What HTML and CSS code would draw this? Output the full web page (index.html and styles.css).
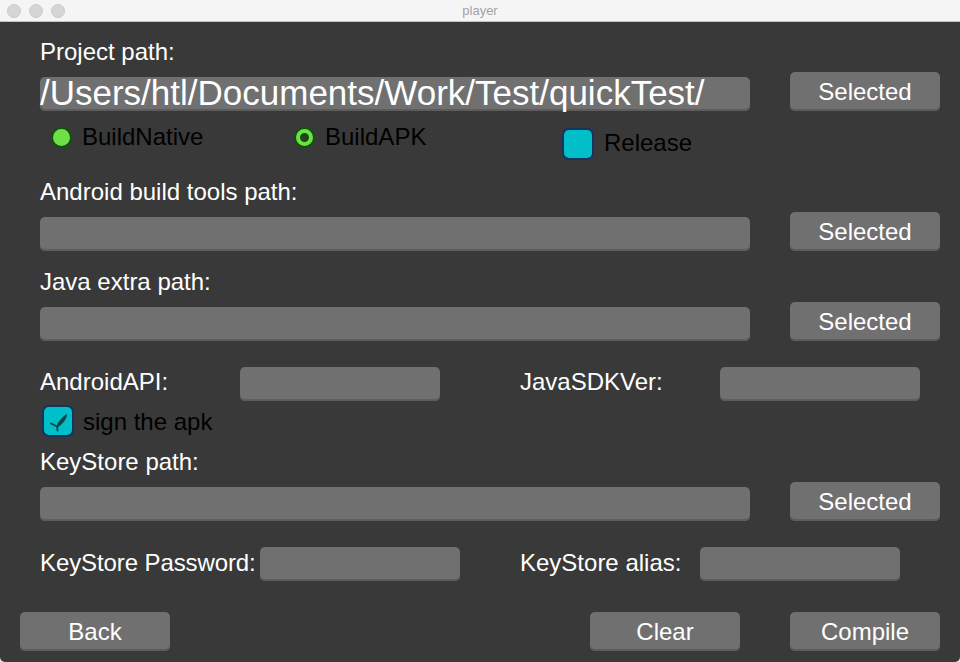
FILE: index.html
```html
<!DOCTYPE html>
<html>
<head>
<meta charset="utf-8">
<title>player</title>
<link rel="stylesheet" href="styles.css">
</head>
<body>
<div class="window">
  <div class="titlebar">
    <div class="lights"><span class="light"></span><span class="light"></span><span class="light"></span></div>
    <div class="title">player</div>
  </div>
  <div class="content">
    <div class="form">
      <div class="label label-first">Project path:</div>
      <div class="path-row">
        <div class="field field-wide"><span class="path-text">/Users/htl/Documents/Work/Test/quickTest/</span></div>
        <div class="btn">Selected</div>
      </div>
      <div class="options-row">
        <div class="option opt-native"><span class="radio"></span><span class="opt-text">BuildNative</span></div>
        <div class="option opt-apk"><span class="radio radio-ring"><span class="radio-dot"></span></span><span class="opt-text">BuildAPK</span></div>
        <div class="option opt-release"><span class="checkbox"></span><span class="opt-text release-text">Release</span></div>
      </div>
      <div class="label label-section">Android build tools path:</div>
      <div class="path-row">
        <div class="field field-wide"></div>
        <div class="btn">Selected</div>
      </div>
      <div class="label label-section2">Java extra path:</div>
      <div class="path-row">
        <div class="field field-wide"></div>
        <div class="btn">Selected</div>
      </div>
      <div class="pair-row api-row">
        <div class="pair-label">AndroidAPI:</div>
        <div class="field field-small"></div>
        <div class="pair-label pair-label-right">JavaSDKVer:</div>
        <div class="field field-small"></div>
      </div>
      <div class="sign-row">
        <span class="checkbox checkbox-checked">
          <svg class="check" viewBox="0 0 28 28" width="28" height="28">
            <path d="M7 16.5 L12.6 19.2" stroke="#0c4750" stroke-width="1.8" fill="none" stroke-linecap="round"/>
            <path d="M12.2 19.6 C14 15 17.5 10.4 23.2 6.8 C22.6 12.4 19.2 16.6 14 20.2 Z" fill="#0c4750"/>
            <path d="M13.1 19.2 L13.5 23.6" stroke="#0c4750" stroke-width="1.8" fill="none" stroke-linecap="round"/>
          </svg>
        </span>
        <span class="opt-text sign-text">sign the apk</span>
      </div>
      <div class="label label-keystore">KeyStore path:</div>
      <div class="path-row">
        <div class="field field-wide"></div>
        <div class="btn">Selected</div>
      </div>
      <div class="pair-row key-row">
        <div class="pair-label pass-label">KeyStore Password:</div>
        <div class="field field-small"></div>
        <div class="pair-label alias-label">KeyStore alias:</div>
        <div class="field field-small"></div>
      </div>
    </div>
    <div class="actions">
      <div class="btn">Back</div>
      <div class="actions-right">
        <div class="btn">Clear</div>
        <div class="btn">Compile</div>
      </div>
    </div>
  </div>
</div>
</body>
</html>
```
FILE: styles.css
```css
html, body {
  margin: 0;
  padding: 0;
  background: #e6e6e6;
}
body {
  font-family: "Liberation Sans", Arial, Helvetica, sans-serif;
}
.window {
  width: 960px;
  height: 662px;
  background: #393939;
  border-radius: 0 0 5px 5px;
  overflow: hidden;
  display: flex;
  flex-direction: column;
}
.titlebar {
  height: 21px;
  background: #f5f5f5;
  border-bottom: 1px solid #c4c4c4;
  display: flex;
  align-items: center;
  position: relative;
}
.lights {
  display: flex;
  gap: 8px;
  margin-left: 7px;
}
.light {
  width: 12px;
  height: 12px;
  border-radius: 50%;
  background: #d6d6d6;
  border: 0.5px solid #cacaca;
}
.title {
  position: absolute;
  left: 0;
  right: 0;
  text-align: center;
  font-size: 13px;
  color: #a4a4a4;
  line-height: 21px;
}
.content {
  padding: 16px 20px 0 20px;
  display: flex;
  flex-direction: column;
}
.form {
  padding-left: 20px;
  display: flex;
  flex-direction: column;
}
.label, .pair-label, .opt-text {
  font-size: 24px;
  line-height: 28px;
  color: #ffffff;
  white-space: nowrap;
}
.label-section { margin-top: 18px; }
.label-section2 { margin-top: 17px; }
.label-keystore { margin-top: 11px; }
.path-row {
  display: flex;
  align-items: flex-end;
  gap: 40px;
  margin-top: 6px;
}
.field {
  height: 34px;
  background: #707070;
  border-radius: 5px;
  box-shadow: inset 0 -2px 0 #5d5d5d;
  box-sizing: border-box;
}
.field-wide {
  width: 710px;
}
.field-small {
  width: 200px;
}
.path-text {
  display: block;
  font-size: 35px;
  line-height: 32px;
  color: #ffffff;
  white-space: nowrap;
}
.btn {
  width: 150px;
  height: 39px;
  background: #707070;
  border-radius: 5px;
  box-shadow: inset 0 -2px 0 #5d5d5d;
  color: #ffffff;
  font-size: 24px;
  line-height: 39px;
  text-align: center;
}
.options-row {
  display: flex;
  align-items: flex-start;
  margin-top: 12px;
}
.option {
  display: flex;
  align-items: flex-start;
}
.opt-text {
  color: #000000;
}
.opt-native {
  margin-left: 11px;
  width: 243px;
}
.opt-apk {
  width: 268px;
}
.radio {
  width: 21px;
  height: 21px;
  box-sizing: border-box;
  border-radius: 50%;
  background: #6ee046;
  border: 2px solid #10520f;
  margin-top: 4px;
  margin-right: 10px;
  display: flex;
  align-items: center;
  justify-content: center;
}
.radio-dot {
  width: 9px;
  height: 9px;
  box-sizing: border-box;
  border-radius: 50%;
  background: #2f3a2e;
  border: 2px solid #0f4d10;
}
.checkbox {
  width: 32px;
  height: 32px;
  box-sizing: border-box;
  border-radius: 7px;
  background: #00bfc8;
  border: 2px solid #14355f;
  display: flex;
  align-items: center;
  justify-content: center;
}
.opt-release .checkbox {
  margin-top: 5px;
  margin-right: 10px;
}
.release-text {
  margin-top: 6px;
}
.pair-row {
  display: flex;
  align-items: flex-start;
}
.api-row {
  margin-top: 26px;
}
.key-row {
  margin-top: 26px;
}
.pair-label {
  width: 200px;
  margin-top: 1px;
}
.pair-label-right {
  margin-left: 80px;
}
.pass-label {
  width: 220px;
  margin-top: 2px;
  letter-spacing: -0.1px;
}
.alias-label {
  width: 180px;
  margin-left: 60px;
  margin-top: 2px;
}
.sign-row {
  display: flex;
  align-items: flex-start;
  margin-top: 4px;
}
.checkbox-checked {
  margin-left: 2px;
  margin-right: 9px;
}
.check {
  display: block;
}
.sign-text {
  margin-top: 3px;
}
.actions {
  display: flex;
  justify-content: space-between;
  margin-top: 31px;
}
.actions-right {
  display: flex;
  gap: 50px;
}
```
